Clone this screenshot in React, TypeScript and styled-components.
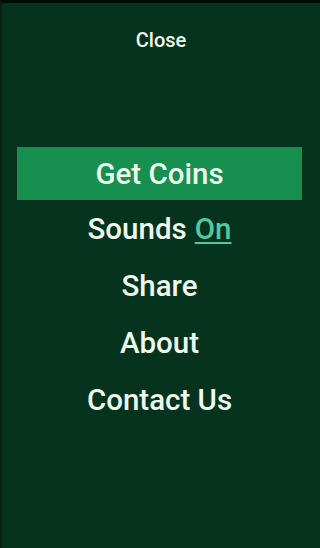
import React from "react";
import styled, { createGlobalStyle } from "styled-components";

const GlobalStyle = createGlobalStyle`
    html, body {
        margin: 0;
        padding: 0;
        background: #06331e;
    }
    * {
        box-sizing: border-box;
    }
`;

const Screen = styled.div`
    width: 320px;
    height: 548px;
    background: #06331e;
    border-top: 3px solid #020d06;
    border-left: 2px solid #0a1f12;
    font-family: Roboto, "Liberation Sans", sans-serif;
    color: #eef8ee;
    display: flex;
    flex-direction: column;
    align-items: center;
    overflow: hidden;
`;

const CloseButton = styled.div`
    margin-top: 25px;
    font-size: 20px;
    font-weight: 500;
    line-height: 24px;
    cursor: pointer;
`;

const Menu = styled.ul`
    list-style: none;
    margin: 95px 0 0;
    padding: 0 18px 0 15px;
    width: 100%;
    display: flex;
    flex-direction: column;
`;

const Item = styled.li<{ active?: boolean }>`
    height: ${(p) => (p.active ? "53px" : "57px")};
    display: flex;
    align-items: center;
    justify-content: center;
    font-size: 29.5px;
    font-weight: 500;
    background: ${(p) => (p.active ? "#168f4f" : "transparent")};
    cursor: pointer;
`;

const Toggle = styled.span`
    color: #52c7a3;
    text-decoration: underline;
    text-underline-offset: 3px;
    margin-left: 8px;
`;

export default function App() {
    return (
        <>
            <GlobalStyle />
            <Screen>
                <CloseButton>Close</CloseButton>
                <Menu>
                    <Item active>Get Coins</Item>
                    <Item>
                        Sounds<Toggle>On</Toggle>
                    </Item>
                    <Item>Share</Item>
                    <Item>About</Item>
                    <Item>Contact Us</Item>
                </Menu>
            </Screen>
        </>
    );
}
